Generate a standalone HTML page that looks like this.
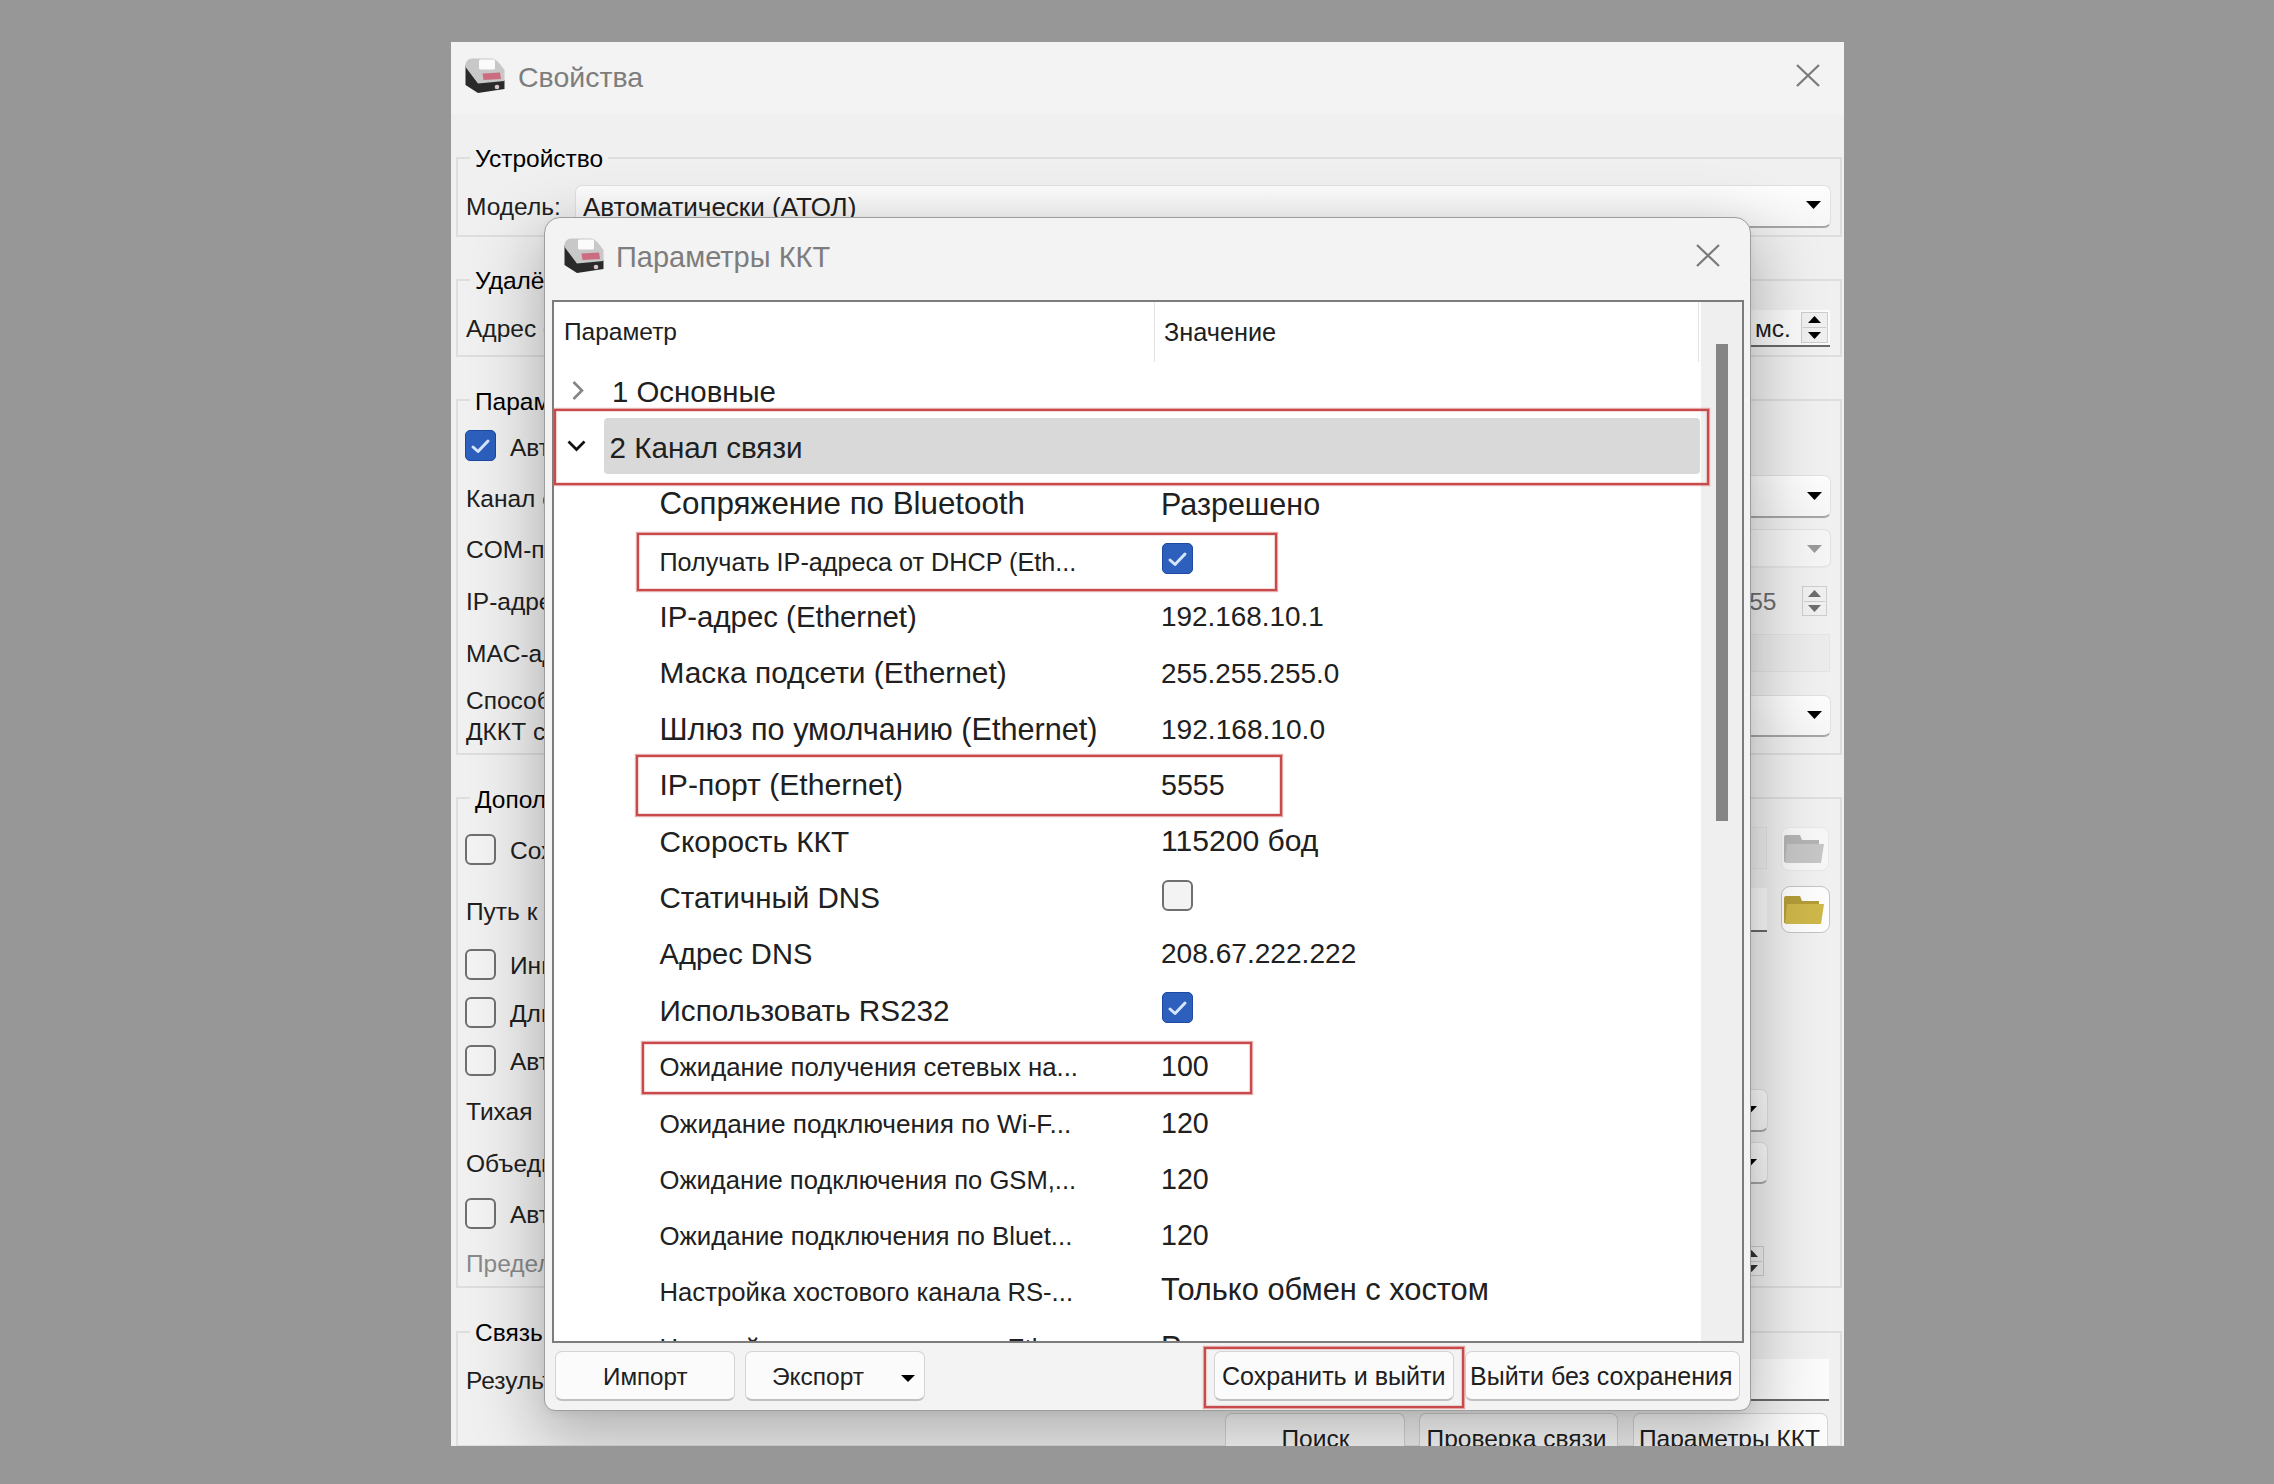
<!DOCTYPE html><html><head><meta charset="utf-8"><style>
html,body{margin:0;padding:0}
body{width:2274px;height:1484px;background:#979797;position:relative;overflow:hidden;font-family:"Liberation Sans", sans-serif}
.t{position:absolute;white-space:nowrap}
.b{position:absolute}
</style></head><body>
<div class="b" style="left:451px;top:42px;width:1393px;height:1404px;background:#f0f0f0"></div>
<div class="b" style="left:451px;top:42px;width:1393px;height:72px;background:#f3f3f3"></div>
<svg class="b" style="left:465px;top:57px" width="40.0" height="37.0" viewBox="0 0 40 37">
<path d="M0.5,8 L0.5,28 L13,36 L39.5,32 L39.5,23 L13,26 Z" fill="#2a2a2a"/>
<path d="M0.5,8 Q1,2 7,1.5 L27,1.5 Q31,2 35,7 L39.5,13 L39.5,24 L13,26.5 L0.5,10 Z" fill="#c8c8c8"/>
<rect x="14" y="2.5" width="16" height="10" rx="1.5" fill="#fbfbfb"/>
<path d="M17.5,16.5 L35,15.5 L36,22 L18.5,23 Z" fill="#cc6c80"/>
<circle cx="32" cy="30" r="2.3" fill="#d8c4ca"/>
</svg>
<div class="t" style="left:518px;top:63.3px;font-size:28.5px;line-height:28.5px;color:#7d7d7d;">Свойства</div>
<svg class="b" style="left:1796px;top:64px" width="24" height="23"><path d="M1,1 L23,22 M23,1 L1,22" stroke="#7a7a7a" stroke-width="2.2" fill="none"/></svg>
<div class="b" style="left:456px;top:157px;width:1386px;height:80px;box-sizing:border-box;border:2px solid #dedede"></div>
<div class="t" style="left:470px;top:147.3px;font-size:24.5px;line-height:24.5px;background:#f0f0f0;padding:0 5px;color:#000">Устройство</div>
<div class="b" style="left:456px;top:279px;width:1386px;height:78px;box-sizing:border-box;border:2px solid #dedede"></div>
<div class="t" style="left:470px;top:268.8px;font-size:24.5px;line-height:24.5px;background:#f0f0f0;padding:0 5px;color:#000">Удалённое подключение</div>
<div class="b" style="left:456px;top:399px;width:1386px;height:356px;box-sizing:border-box;border:2px solid #dedede"></div>
<div class="t" style="left:470px;top:390.1px;font-size:24.5px;line-height:24.5px;background:#f0f0f0;padding:0 5px;color:#000">Параметры подключения</div>
<div class="b" style="left:456px;top:797px;width:1386px;height:491px;box-sizing:border-box;border:2px solid #dedede"></div>
<div class="t" style="left:470px;top:787.7px;font-size:24.5px;line-height:24.5px;background:#f0f0f0;padding:0 5px;color:#000">Дополнительно</div>
<div class="b" style="left:456px;top:1331px;width:1386px;height:116px;box-sizing:border-box;border:2px solid #dedede"></div>
<div class="t" style="left:470px;top:1320.9px;font-size:24.5px;line-height:24.5px;background:#f0f0f0;padding:0 5px;color:#000">Связь</div>
<div class="t" style="left:466px;top:195.3px;font-size:24.5px;line-height:24.5px;color:#202020;">Модель:</div>
<div class="b" style="left:575px;top:185px;width:1256px;height:43px;box-sizing:border-box;border:1px solid #e0e0e0;border-bottom:2px solid #a6a6a6;border-radius:7px;background:linear-gradient(#fdfdfd,#f6f6f6)"></div>
<div class="t" style="left:583px;top:193.6px;font-size:26px;line-height:26px;color:#202020;">Автоматически (АТОЛ)</div>
<svg class="b" style="left:1806.0px;top:201.0px" width="15" height="8"><polygon points="0,0 15,0 7.5,8" fill="#000"/></svg>
<div class="t" style="left:466px;top:317.3px;font-size:24.5px;line-height:24.5px;color:#202020;">Адрес сервера</div>
<div class="b" style="left:1750px;top:310px;width:80px;height:37px;background:#fbfbfb;border-bottom:2px solid #6a6a6a;box-sizing:border-box"></div>
<div class="t" style="left:1755px;top:317.3px;font-size:24.5px;line-height:24.5px;color:#202020;">мс.</div>
<div class="b" style="left:1801px;top:312px;width:27px;height:31px;box-sizing:border-box;border:1px solid #cdcdcd;background:#f0f0f0"></div>
<svg class="b" style="left:1808.0px;top:316.25px" width="13" height="7"><polygon points="6.5,0 13,7 0,7" fill="#000"/></svg>
<div class="b" style="left:1803px;top:327.0px;width:23px;height:1px;background:#cdcdcd"></div>
<svg class="b" style="left:1808.0px;top:331.75px" width="13" height="7"><polygon points="0,0 13,0 6.5,7" fill="#000"/></svg>
<div class="b" style="left:465px;top:430px;width:31px;height:31px;border-radius:5px;background:#2d5fbd;border:1px solid #1d4aa0;box-sizing:border-box"><svg width="31" height="31" style="position:absolute;left:-1px;top:-1px"><polyline points="8,17 13,21.5 23,11" fill="none" stroke="#d6e6ff" stroke-width="3" stroke-linecap="round" stroke-linejoin="round"/></svg></div>
<div class="t" style="left:510px;top:436.3px;font-size:24.5px;line-height:24.5px;color:#202020;">Автоматический поиск</div>
<div class="t" style="left:466px;top:486.7px;font-size:24.5px;line-height:24.5px;color:#202020;">Канал связи</div>
<div class="b" style="left:1300px;top:475px;width:531px;height:43px;box-sizing:border-box;border:1px solid #e0e0e0;border-bottom:2px solid #a6a6a6;border-radius:7px;background:linear-gradient(#fdfdfd,#f6f6f6)"></div>
<svg class="b" style="left:1806.5px;top:492.0px" width="15" height="8"><polygon points="0,0 15,0 7.5,8" fill="#000"/></svg>
<div class="t" style="left:466px;top:538.3px;font-size:24.5px;line-height:24.5px;color:#202020;">COM-порт</div>
<div class="b" style="left:1300px;top:529px;width:531px;height:39px;box-sizing:border-box;border:1px solid #e0e0e0;border-bottom:2px solid #e6e6e6;border-radius:7px;background:#f5f5f5"></div>
<svg class="b" style="left:1806.5px;top:544.5px" width="15" height="8"><polygon points="0,0 15,0 7.5,8" fill="#9a9a9a"/></svg>
<div class="t" style="left:466px;top:590.3px;font-size:24.5px;line-height:24.5px;color:#202020;">IP-адрес</div>
<div class="t" style="left:1735.5px;top:589.9px;font-size:24.5px;line-height:24.5px;color:#6d6d6d;">255</div>
<div class="b" style="left:1802px;top:586px;width:25px;height:30px;box-sizing:border-box;border:1px solid #cdcdcd;background:#f0f0f0"></div>
<svg class="b" style="left:1808.0px;top:590.0px" width="13" height="7"><polygon points="6.5,0 13,7 0,7" fill="#6d6d6d"/></svg>
<div class="b" style="left:1804px;top:600.5px;width:21px;height:1px;background:#cdcdcd"></div>
<svg class="b" style="left:1808.0px;top:605.0px" width="13" height="7"><polygon points="0,0 13,0 6.5,7" fill="#6d6d6d"/></svg>
<div class="t" style="left:466px;top:642.3px;font-size:24.5px;line-height:24.5px;color:#202020;">MAC-адрес</div>
<div class="b" style="left:1300px;top:634px;width:530px;height:38px;background:#ececec;border:1px solid #e4e4e4;box-sizing:border-box"></div>
<div class="t" style="left:466px;top:688.7px;font-size:24.5px;line-height:24.5px;color:#202020;">Способ подключения</div>
<div class="t" style="left:466px;top:720.0px;font-size:24.5px;line-height:24.5px;color:#202020;">ДККТ с помощью</div>
<div class="b" style="left:1300px;top:695px;width:531px;height:42px;box-sizing:border-box;border:1px solid #e0e0e0;border-bottom:2px solid #a6a6a6;border-radius:7px;background:linear-gradient(#fdfdfd,#f6f6f6)"></div>
<svg class="b" style="left:1806.5px;top:711.0px" width="15" height="8"><polygon points="0,0 15,0 7.5,8" fill="#000"/></svg>
<div class="b" style="left:465px;top:834px;width:31px;height:31px;border-radius:6px;background:#f3f3f3;border:2px solid #6f6f6f;box-sizing:border-box"></div>
<div class="t" style="left:510px;top:839.3px;font-size:24.5px;line-height:24.5px;color:#202020;">Сохранять лог</div>
<div class="b" style="left:1300px;top:827px;width:467px;height:42px;background:#eeeeee;border:1px solid #e4e4e4;box-sizing:border-box"></div>
<div class="b" style="left:1781px;top:827px;width:48px;height:44px;box-sizing:border-box;border:1px solid #e8e8e8;border-radius:8px;background:#f7f7f7"></div>
<svg class="b" style="left:1784px;top:835px" width="41" height="29" viewBox="0 0 41 29"><path d="M0,2 Q0,0 2,0 L16,0 L18,5 L35,5 L35,27 L0,27 Z" fill="#b4b4b4"/><path d="M3,9 L40,9 L37,28 L1,28 Z" fill="#c6c6c6"/></svg>
<div class="t" style="left:466px;top:899.8px;font-size:24.5px;line-height:24.5px;color:#202020;">Путь к логам</div>
<div class="b" style="left:1300px;top:888px;width:467px;height:44px;background:#fbfbfb;border-bottom:2px solid #6a6a6a;box-sizing:border-box"></div>
<div class="b" style="left:1781px;top:886px;width:49px;height:47px;box-sizing:border-box;border:1.5px solid #c4c4c4;border-radius:9px;background:#fdfdfd"></div>
<svg class="b" style="left:1784px;top:896px" width="41" height="29" viewBox="0 0 41 29"><path d="M0,2 Q0,0 2,0 L16,0 L18,5 L35,5 L35,27 L0,27 Z" fill="#b49c38"/><path d="M3,8 L40,8 L37,28 L1,28 Z" fill="#cfb84a"/></svg>
<div class="b" style="left:465px;top:949px;width:31px;height:31px;border-radius:6px;background:#f3f3f3;border:2px solid #6f6f6f;box-sizing:border-box"></div>
<div class="t" style="left:510px;top:954.3px;font-size:24.5px;line-height:24.5px;color:#202020;">Инвертировать</div>
<div class="b" style="left:465px;top:997px;width:31px;height:31px;border-radius:6px;background:#f3f3f3;border:2px solid #6f6f6f;box-sizing:border-box"></div>
<div class="t" style="left:510px;top:1002.3px;font-size:24.5px;line-height:24.5px;color:#202020;">Длительность</div>
<div class="b" style="left:465px;top:1045px;width:31px;height:31px;border-radius:6px;background:#f3f3f3;border:2px solid #6f6f6f;box-sizing:border-box"></div>
<div class="t" style="left:510px;top:1050.3px;font-size:24.5px;line-height:24.5px;color:#202020;">Автоматически</div>
<div class="t" style="left:466px;top:1100.3px;font-size:24.5px;line-height:24.5px;color:#202020;">Тихая</div>
<div class="b" style="left:1300px;top:1089px;width:468px;height:43px;box-sizing:border-box;border:1px solid #e0e0e0;border-bottom:2px solid #a6a6a6;border-radius:7px;background:linear-gradient(#fdfdfd,#f6f6f6)"></div>
<svg class="b" style="left:1742.0px;top:1106.0px" width="15" height="8"><polygon points="0,0 15,0 7.5,8" fill="#000"/></svg>
<div class="t" style="left:466px;top:1152.3px;font-size:24.5px;line-height:24.5px;color:#202020;">Объединять</div>
<div class="b" style="left:1300px;top:1142px;width:468px;height:42px;box-sizing:border-box;border:1px solid #e0e0e0;border-bottom:2px solid #a6a6a6;border-radius:7px;background:linear-gradient(#fdfdfd,#f6f6f6)"></div>
<svg class="b" style="left:1742.0px;top:1159.0px" width="15" height="8"><polygon points="0,0 15,0 7.5,8" fill="#000"/></svg>
<div class="b" style="left:465px;top:1198px;width:31px;height:31px;border-radius:6px;background:#f3f3f3;border:2px solid #6f6f6f;box-sizing:border-box"></div>
<div class="t" style="left:510px;top:1203.3px;font-size:24.5px;line-height:24.5px;color:#202020;">Автоматически</div>
<div class="t" style="left:466px;top:1251.8px;font-size:24.5px;line-height:24.5px;color:#8a8a8a;">Предельное время</div>
<div class="b" style="left:1738px;top:1246px;width:26px;height:30px;box-sizing:border-box;border:1px solid #cdcdcd;background:#f0f0f0"></div>
<svg class="b" style="left:1744.5px;top:1250.0px" width="13" height="7"><polygon points="6.5,0 13,7 0,7" fill="#333"/></svg>
<div class="b" style="left:1740px;top:1260.5px;width:22px;height:1px;background:#cdcdcd"></div>
<svg class="b" style="left:1744.5px;top:1265.0px" width="13" height="7"><polygon points="0,0 13,0 6.5,7" fill="#333"/></svg>
<div class="t" style="left:466px;top:1369.3px;font-size:24.5px;line-height:24.5px;color:#202020;">Результат</div>
<div class="b" style="left:1300px;top:1359px;width:529px;height:42px;background:#fbfbfb;border-bottom:2px solid #6a6a6a;box-sizing:border-box"></div>
<div class="b" style="left:1225px;top:1413px;width:180px;height:57px;box-sizing:border-box;border:1px solid #d4d4d4;border-bottom:2px solid #c0c0c0;border-radius:7px;background:#fbfbfb"></div>
<div class="t" style="left:1281.5px;top:1427.3px;font-size:24.5px;line-height:24.5px;color:#202020;">Поиск</div>
<div class="b" style="left:1419px;top:1413px;width:199px;height:57px;box-sizing:border-box;border:1px solid #d4d4d4;border-bottom:2px solid #c0c0c0;border-radius:7px;background:#fbfbfb"></div>
<div class="t" style="left:1426.6px;top:1427.3px;font-size:24.5px;line-height:24.5px;color:#202020;">Проверка связи</div>
<div class="b" style="left:1633px;top:1413px;width:195px;height:57px;box-sizing:border-box;border:1px solid #d4d4d4;border-bottom:2px solid #c0c0c0;border-radius:7px;background:#fbfbfb"></div>
<div class="t" style="left:1639px;top:1427.3px;font-size:24.5px;line-height:24.5px;color:#202020;">Параметры ККТ</div>
<div class="b" style="left:451px;top:1446px;width:1393px;height:38px;background:#979797"></div>
<div class="b" style="left:451px;top:42px;width:1393px;height:1404px;overflow:hidden"><div class="b" style="left:93px;top:175px;width:1207px;height:1194px;box-sizing:border-box;border:1.5px solid #9d9d9d;border-radius:16px 16px 11px 11px;background:#f3f3f3;box-shadow:0 3px 8px rgba(0,0,0,0.05), 0 22px 64px 8px rgba(0,0,0,0.25)"></div></div>
<svg class="b" style="left:564px;top:237px" width="40.0" height="37.0" viewBox="0 0 40 37">
<path d="M0.5,8 L0.5,28 L13,36 L39.5,32 L39.5,23 L13,26 Z" fill="#2a2a2a"/>
<path d="M0.5,8 Q1,2 7,1.5 L27,1.5 Q31,2 35,7 L39.5,13 L39.5,24 L13,26.5 L0.5,10 Z" fill="#c8c8c8"/>
<rect x="14" y="2.5" width="16" height="10" rx="1.5" fill="#fbfbfb"/>
<path d="M17.5,16.5 L35,15.5 L36,22 L18.5,23 Z" fill="#cc6c80"/>
<circle cx="32" cy="30" r="2.3" fill="#d8c4ca"/>
</svg>
<div class="t" style="left:616px;top:242.9px;font-size:29px;line-height:29px;color:#7d7d7d;">Параметры ККТ</div>
<svg class="b" style="left:1696px;top:244px" width="24" height="23"><path d="M1,1 L23,22 M23,1 L1,22" stroke="#7a7a7a" stroke-width="2.2" fill="none"/></svg>
<div class="b" style="left:552px;top:300px;width:1192px;height:1043px;background:#fff;box-sizing:border-box;border:2px solid #7c7c7c;overflow:hidden"></div>
<div class="b" style="left:1701px;top:302px;width:41px;height:1039px;background:#efefef"></div>
<div class="b" style="left:1716px;top:344px;width:12px;height:477px;background:#858585"></div>
<div class="b" style="left:1154px;top:302px;width:1px;height:60px;background:#e3e3e3"></div>
<div class="b" style="left:1698px;top:302px;width:1px;height:60px;background:#e3e3e3"></div>
<div class="t" style="left:564px;top:320.3px;font-size:24.5px;line-height:24.5px;color:#202020;">Параметр</div>
<div class="t" style="left:1164px;top:319.6px;font-size:25.3px;line-height:25.3px;color:#202020;">Значение</div>
<svg class="b" style="left:570px;top:379px" width="18" height="24"><polyline points="3.5,3 12,11.5 3.5,20" fill="none" stroke="#858585" stroke-width="2.6"/></svg>
<div class="b" style="left:604px;top:418px;width:1096px;height:56px;background:#d9d9d9;border-radius:4px"></div>
<svg class="b" style="left:566px;top:438px" width="22" height="16"><polyline points="2.5,3.5 10.5,11.5 18.5,3.5" fill="none" stroke="#111" stroke-width="2.7"/></svg>
<div class="t" style="left:612px;top:376.6px;font-size:29.4px;line-height:29.4px;color:#202020;">1 Основные</div>
<div class="t" style="left:609.5px;top:432.5px;font-size:29.6px;line-height:29.6px;color:#202020;">2 Канал связи</div>
<div class="t" style="left:659.5px;top:488.3px;font-size:31.3px;line-height:31.3px;color:#202020;">Сопряжение по Bluetooth</div>
<div class="t" style="left:1161px;top:488.7px;font-size:30.5px;line-height:30.5px;color:#202020;">Разрешено</div>
<div class="t" style="left:659.5px;top:549.7px;font-size:25.2px;line-height:25.2px;color:#202020;">Получать IP-адреса от DHCP (Eth...</div>
<div class="t" style="left:659.5px;top:602.3px;font-size:29.4px;line-height:29.4px;color:#202020;">IP-адрес (Ethernet)</div>
<div class="t" style="left:1161px;top:603.3px;font-size:27.9px;line-height:27.9px;color:#202020;">192.168.10.1</div>
<div class="t" style="left:659.5px;top:658.1px;font-size:29.9px;line-height:29.9px;color:#202020;">Маска подсети (Ethernet)</div>
<div class="t" style="left:1161px;top:659.5px;font-size:27.9px;line-height:27.9px;color:#202020;">255.255.255.0</div>
<div class="t" style="left:659.5px;top:713.7px;font-size:30.65px;line-height:30.65px;color:#202020;">Шлюз по умолчанию (Ethernet)</div>
<div class="t" style="left:1161px;top:715.5px;font-size:28.1px;line-height:28.1px;color:#202020;">192.168.10.0</div>
<div class="t" style="left:659.5px;top:770.3px;font-size:30.1px;line-height:30.1px;color:#202020;">IP-порт (Ethernet)</div>
<div class="t" style="left:1161px;top:771.3px;font-size:28.6px;line-height:28.6px;color:#202020;">5555</div>
<div class="t" style="left:659.5px;top:826.8px;font-size:29.75px;line-height:29.75px;color:#202020;">Скорость ККТ</div>
<div class="t" style="left:1161px;top:826.2px;font-size:30.1px;line-height:30.1px;color:#202020;">115200 бод</div>
<div class="t" style="left:659.5px;top:883.2px;font-size:29.55px;line-height:29.55px;color:#202020;">Статичный DNS</div>
<div class="t" style="left:659.5px;top:939.8px;font-size:29.1px;line-height:29.1px;color:#202020;">Адрес DNS</div>
<div class="t" style="left:1161px;top:940.3px;font-size:28.1px;line-height:28.1px;color:#202020;">208.67.222.222</div>
<div class="t" style="left:659.5px;top:995.5px;font-size:29.7px;line-height:29.7px;color:#202020;">Использовать RS232</div>
<div class="t" style="left:659.5px;top:1055.0px;font-size:25.75px;line-height:25.75px;color:#202020;">Ожидание получения сетевых на...</div>
<div class="t" style="left:1161px;top:1052.3px;font-size:28.6px;line-height:28.6px;color:#202020;">100</div>
<div class="t" style="left:659.5px;top:1110.8px;font-size:26.2px;line-height:26.2px;color:#202020;">Ожидание подключения по Wi-F...</div>
<div class="t" style="left:1161px;top:1108.5px;font-size:28.6px;line-height:28.6px;color:#202020;">120</div>
<div class="t" style="left:659.5px;top:1167.5px;font-size:25.6px;line-height:25.6px;color:#202020;">Ожидание подключения по GSM,...</div>
<div class="t" style="left:1161px;top:1164.7px;font-size:28.6px;line-height:28.6px;color:#202020;">120</div>
<div class="t" style="left:659.5px;top:1223.6px;font-size:25.8px;line-height:25.8px;color:#202020;">Ожидание подключения по Bluet...</div>
<div class="t" style="left:1161px;top:1220.9px;font-size:28.6px;line-height:28.6px;color:#202020;">120</div>
<div class="t" style="left:659.5px;top:1279.8px;font-size:25.7px;line-height:25.7px;color:#202020;">Настройка хостового канала RS-...</div>
<div class="t" style="left:1161px;top:1275.2px;font-size:30.8px;line-height:30.8px;color:#202020;">Только обмен с хостом</div>
<div class="t" style="left:659.5px;top:1336.0px;font-size:25.7px;line-height:25.7px;color:#202020;">Настройка хостового канала Eth...</div>
<div class="t" style="left:1161px;top:1331.7px;font-size:30.5px;line-height:30.5px;color:#202020;">Разрешено</div>
<div class="b" style="left:1162px;top:543px;width:31px;height:31px;border-radius:5px;background:#2d5fbd;border:1px solid #1d4aa0;box-sizing:border-box"><svg width="31" height="31" style="position:absolute;left:-1px;top:-1px"><polyline points="8,17 13,21.5 23,11" fill="none" stroke="#d6e6ff" stroke-width="3" stroke-linecap="round" stroke-linejoin="round"/></svg></div>
<div class="b" style="left:1162px;top:880px;width:31px;height:31px;border-radius:6px;background:#f3f3f3;border:2px solid #6f6f6f;box-sizing:border-box"></div>
<div class="b" style="left:1162px;top:992px;width:31px;height:31px;border-radius:5px;background:#2d5fbd;border:1px solid #1d4aa0;box-sizing:border-box"><svg width="31" height="31" style="position:absolute;left:-1px;top:-1px"><polyline points="8,17 13,21.5 23,11" fill="none" stroke="#d6e6ff" stroke-width="3" stroke-linecap="round" stroke-linejoin="round"/></svg></div>
<div class="b" style="left:552px;top:1341px;width:1192px;height:2px;background:#7c7c7c"></div>
<div class="b" style="left:546px;top:1343px;width:1203px;height:66px;background:#f3f3f3;border-radius:0 0 9px 9px"></div>
<div class="b" style="left:555px;top:1351px;width:180px;height:50px;box-sizing:border-box;border:1px solid #d4d4d4;border-bottom:2px solid #c0c0c0;border-radius:7px;background:#fbfbfb"></div>
<div class="t" style="left:603px;top:1365.0px;font-size:24.2px;line-height:24.2px;color:#202020;">Импорт</div>
<div class="b" style="left:745px;top:1351px;width:180px;height:50px;box-sizing:border-box;border:1px solid #d4d4d4;border-bottom:2px solid #c0c0c0;border-radius:7px;background:#fbfbfb"></div>
<div class="t" style="left:772px;top:1364.8px;font-size:24.5px;line-height:24.5px;color:#202020;">Экспорт</div>
<svg class="b" style="left:901.0px;top:1374.5px" width="14" height="7"><polygon points="0,0 14,0 7.0,7" fill="#000"/></svg>
<div class="b" style="left:1214px;top:1351px;width:240px;height:50px;box-sizing:border-box;border:1px solid #d4d4d4;border-bottom:2px solid #c0c0c0;border-radius:7px;background:#fbfbfb"></div>
<div class="t" style="left:1222px;top:1364.3px;font-size:25.1px;line-height:25.1px;color:#202020;">Сохранить и выйти</div>
<div class="b" style="left:1465px;top:1351px;width:275px;height:50px;box-sizing:border-box;border:1px solid #d4d4d4;border-bottom:2px solid #c0c0c0;border-radius:7px;background:#fbfbfb"></div>
<div class="t" style="left:1470px;top:1364.3px;font-size:25.0px;line-height:25.0px;color:#202020;">Выйти без сохранения</div>
<div class="b" style="left:553.5px;top:408.5px;width:1155px;height:76px;box-sizing:border-box;border:2px solid #c94a4a;box-shadow:0 0 1px 0.6px rgba(210,100,100,0.55), inset 0 0 1px 0.6px rgba(210,100,100,0.45)"></div>
<div class="b" style="left:636.5px;top:532.5px;width:640px;height:58px;box-sizing:border-box;border:2px solid #c94a4a;box-shadow:0 0 1px 0.6px rgba(210,100,100,0.55), inset 0 0 1px 0.6px rgba(210,100,100,0.45)"></div>
<div class="b" style="left:635.5px;top:754.5px;width:646px;height:61px;box-sizing:border-box;border:2px solid #c94a4a;box-shadow:0 0 1px 0.6px rgba(210,100,100,0.55), inset 0 0 1px 0.6px rgba(210,100,100,0.45)"></div>
<div class="b" style="left:641.5px;top:1041.5px;width:610px;height:52px;box-sizing:border-box;border:2px solid #c94a4a;box-shadow:0 0 1px 0.6px rgba(210,100,100,0.55), inset 0 0 1px 0.6px rgba(210,100,100,0.45)"></div>
<div class="b" style="left:1203.5px;top:1346.5px;width:260px;height:61px;box-sizing:border-box;border:2px solid #c94a4a;box-shadow:0 0 1px 0.6px rgba(210,100,100,0.55), inset 0 0 1px 0.6px rgba(210,100,100,0.45)"></div>
</body></html>
